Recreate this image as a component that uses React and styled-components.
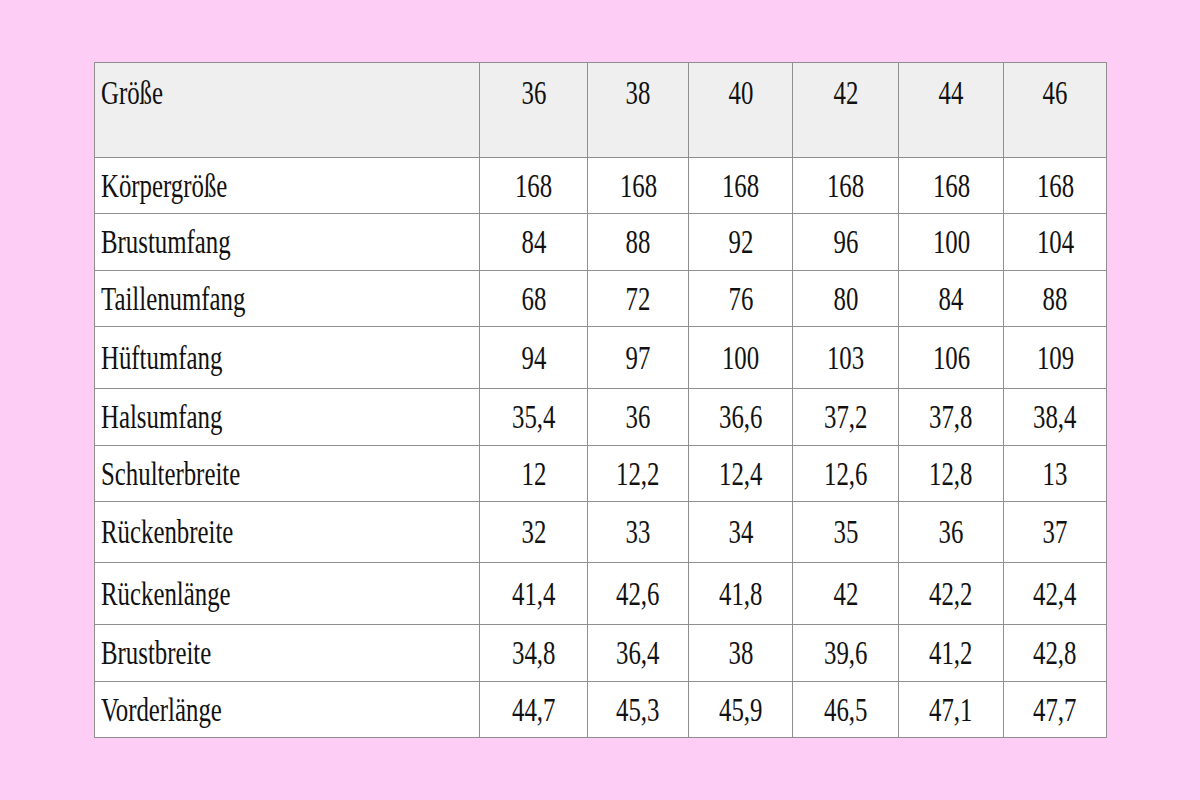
import React from "react";
import styled, { createGlobalStyle } from "styled-components";

const Global = createGlobalStyle`
  html, body { margin: 0; padding: 0; background: #fdcdf6; }
  body { font-family: "Liberation Serif", "Times New Roman", serif; }
`;

const Page = styled.div`
  width: 1200px;
  height: 800px;
  box-sizing: border-box;
  padding: 62px 0 0 94px;
  background: #fdcdf6;
`;

const Table = styled.table`
  border-collapse: collapse;
  table-layout: fixed;
  width: 1012px;
  background: #ffffff;
  color: #111;
  font-family: "Liberation Serif", "Times New Roman", serif;
  font-size: 34px;
`;

const Row = styled.tr`
  height: ${(p) => p.$h}px;
  background: ${(p) => (p.$head ? "#efefef" : "#ffffff")};
`;

const Cell = styled.td`
  border: 1px solid #8f8f8f;
  padding: ${(p) => (p.$head ? "11px 6px 0" : "0 6px")};
  vertical-align: ${(p) => (p.$head ? "top" : "middle")};
  text-align: ${(p) => (p.$first ? "left" : "center")};
  font-weight: 400;
  white-space: nowrap;
  overflow: visible;
  line-height: normal;
`;

const Txt = styled.span`
  display: inline-block;
  transform: scaleX(0.73);
  transform-origin: ${(p) => (p.$first ? "left center" : "center center")};
`;

const widths = [385, 108, 101, 104, 106, 105, 103];

const header = ["Größe", "36", "38", "40", "42", "44", "46"];

const rows = [
  ["Körpergröße", "168", "168", "168", "168", "168", "168"],
  ["Brustumfang", "84", "88", "92", "96", "100", "104"],
  ["Taillenumfang", "68", "72", "76", "80", "84", "88"],
  ["Hüftumfang", "94", "97", "100", "103", "106", "109"],
  ["Halsumfang", "35,4", "36", "36,6", "37,2", "37,8", "38,4"],
  ["Schulterbreite", "12", "12,2", "12,4", "12,6", "12,8", "13"],
  ["Rückenbreite", "32", "33", "34", "35", "36", "37"],
  ["Rückenlänge", "41,4", "42,6", "41,8", "42", "42,2", "42,4"],
  ["Brustbreite", "34,8", "36,4", "38", "39,6", "41,2", "42,8"],
  ["Vorderlänge", "44,7", "45,3", "45,9", "46,5", "47,1", "47,7"],
];

const heights = [56, 57, 56, 62, 57, 56, 61, 62, 57, 56];

export default function App() {
  return (
    <>
      <Global />
      <Page>
        <Table>
          <colgroup>
            {widths.map((w, i) => (
              <col key={i} style={{ width: w }} />
            ))}
          </colgroup>
          <thead>
            <Row $head $h={95}>
              {header.map((t, i) => (
                <Cell as="th" key={i} $head $first={i === 0}>
                  <Txt $first={i === 0}>{t}</Txt>
                </Cell>
              ))}
            </Row>
          </thead>
          <tbody>
            {rows.map((r, ri) => (
              <Row key={ri} $h={heights[ri]}>
                {r.map((t, i) => (
                  <Cell key={i} $first={i === 0}>
                    <Txt $first={i === 0}>{t}</Txt>
                  </Cell>
                ))}
              </Row>
            ))}
          </tbody>
        </Table>
      </Page>
    </>
  );
}
